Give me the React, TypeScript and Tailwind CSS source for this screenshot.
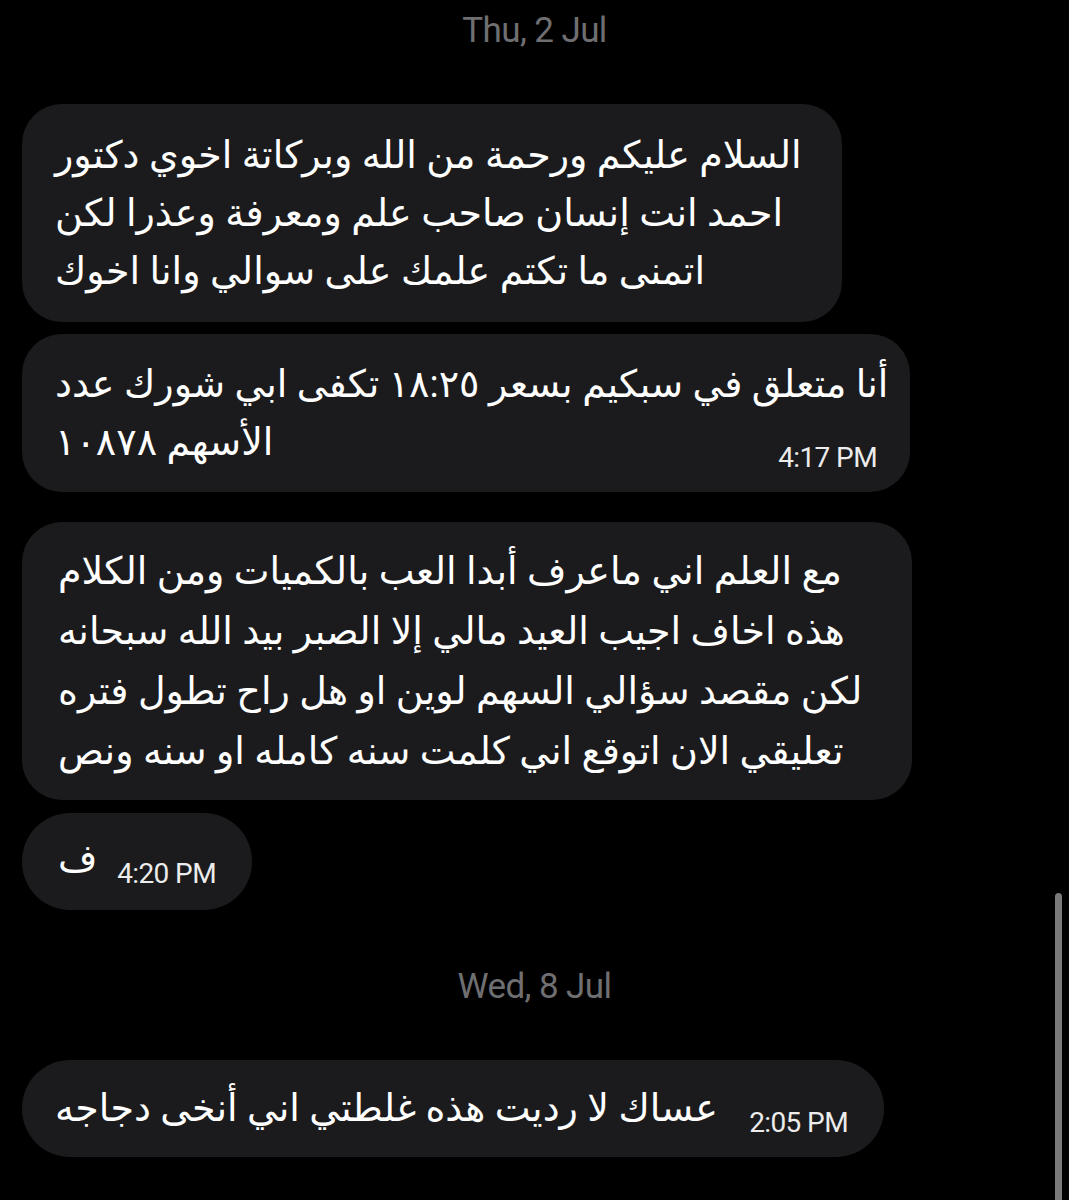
import React from 'react';

const arabic = { fontFamily: 'Roboto, "DejaVu Sans", "Noto Sans", sans-serif' };

function DateLabel({ text }: { text: string }) {
  return (
    <div className="flex h-[36px] items-center justify-center text-[35px] leading-none text-[#6f6f72] tracking-[-0.6px]" style={{ fontFamily: 'Roboto, sans-serif' }}>
      {text}
    </div>
  );
}

function Time({ t }: { t: string }) {
  return (
    <span className="text-[28px] leading-none text-[#ececec] whitespace-nowrap tracking-[-0.6px]" style={{ fontFamily: 'Roboto, sans-serif' }}>
      {t}
    </span>
  );
}

function Line({ children, h = 'h-[58px]' }: { children: React.ReactNode; h?: string }) {
  return (
    <div dir="rtl" className={`${h} text-left whitespace-nowrap overflow-visible`}>
      {children}
    </div>
  );
}

export default function App() {
  return (
    <div className="relative h-[1200px] w-full overflow-hidden bg-black text-white" style={arabic}>
      <div className="pt-[12px]">
        <DateLabel text="Thu, 2 Jul" />
      </div>

      <div className="mt-[56px] flex flex-col items-start pl-[22px]">
        {/* message 1 */}
        <div className="w-[820px] rounded-[40px] bg-[#1b1b1d] pl-[33px] pr-[40px] py-[22px] text-[38px] leading-[58px]">
          <Line>السلام عليكم ورحمة من الله وبركاتة اخوي دكتور</Line>
          <Line>احمد انت إنسان صاحب علم ومعرفة وعذرا لكن</Line>
          <Line>اتمنى ما تكتم علمك على سوالي وانا اخوك</Line>
        </div>

        {/* message 2 */}
        <div className="mt-[12px] h-[158px] w-[888px] rounded-[40px] bg-[#1b1b1d] pl-[33px] pr-[20px] pt-[21px] text-[38px] leading-[58px]">
          <Line>أنا متعلق في سبكيم بسعر ١٨:٢٥ تكفى ابي شورك عدد</Line>
          <div className="flex h-[58px] items-start justify-between">
            <Line>الأسهم ١٠٨٧٨</Line>
            <div className="pt-[12px] pr-[13px]">
              <Time t="4:17 PM" />
            </div>
          </div>
        </div>

        {/* message 3 */}
        <div className="mt-[30px] h-[278px] w-[890px] rounded-[40px] bg-[#1b1b1d] pl-[36px] pr-[40px] pt-[19px] text-[38px] leading-[60px]">
          <Line h="h-[60px]">مع العلم اني ماعرف أبدا العب بالكميات ومن الكلام</Line>
          <Line h="h-[60px]">هذه اخاف اجيب العيد مالي إلا الصبر بيد الله سبحانه</Line>
          <Line h="h-[60px]">لكن مقصد سؤالي السهم لوين او هل راح تطول فتره</Line>
          <Line h="h-[60px]">تعليقي الان اتوقع اني كلمت سنه كامله او سنه ونص</Line>
        </div>

        {/* message 4 */}
        <div className="mt-[13px] flex h-[97px] w-[230px] items-center justify-between rounded-[48px] bg-[#1b1b1d] pl-[36px] pr-[36px]">
          <span dir="rtl" className="text-[38px] leading-none -mt-[8px]">ف</span>
          <span className="mt-[26px]">
            <Time t="4:20 PM" />
          </span>
        </div>
      </div>

      <div className="mt-[58px]">
        <DateLabel text="Wed, 8 Jul" />
      </div>

      <div className="mt-[56px] flex pl-[22px]">
        <div className="flex h-[97px] w-[862px] items-center justify-between rounded-[48px] bg-[#1b1b1d] pl-[33px] pr-[36px]">
          <span dir="rtl" className="text-[38px] leading-none whitespace-nowrap -mt-[2px]">
            عساك لا رديت هذه غلطتي اني أنخى دجاجه
          </span>
          <span className="mt-[30px]">
            <Time t="2:05 PM" />
          </span>
        </div>
      </div>

      {/* scrollbar */}
      <div className="absolute left-[1055px] top-[893px] h-[320px] w-[7px] rounded-full bg-[#7a7a7a]" />
    </div>
  );
}
